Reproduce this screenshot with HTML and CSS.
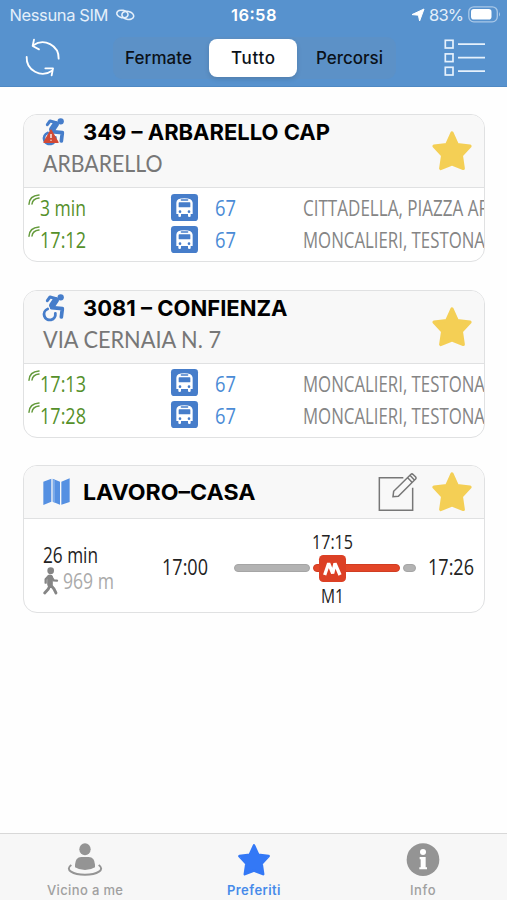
FILE: index.html
```html
<!DOCTYPE html>
<html lang="it">
<head>
<meta charset="utf-8">
<title>Preferiti</title>
<link rel="stylesheet" href="styles.css">
</head>
<body>
<svg class="defs" width="0" height="0">
  <symbol id="star" viewBox="0 0 42 42"><path d="M21 3 L26.2 14.5 L39 16.2 L30.4 25.5 L32.3 38.5 L21 34 L9.7 38.5 L11.600 25.500 L3 16.200 L15.800 14.500Z" fill="currentColor" stroke="currentColor" stroke-width="3.200" stroke-linejoin="round"/></symbol>
  <symbol id="bus" viewBox="0 0 81 81">
    <rect width="81" height="81" rx="10" fill="#467dca"/>
    <path d="M16 60V26Q16 13 40 13T65 26V60H59V66Q59 69 55 69T51 66V60H30V66Q30 69 26 69T22 66V60Z" fill="#fff"/>
    <rect x="29" y="16" width="23" height="4" rx="2" fill="#467dca"/>
    <rect x="23" y="25" width="35" height="15" rx="2" fill="#467dca"/>
    <circle cx="27" cy="53" r="4" fill="#467dca"/><circle cx="54" cy="53" r="4" fill="#467dca"/>
  </symbol>
  <symbol id="live" viewBox="0 0 36 36"><g fill="none" stroke="#659b3d" stroke-width="4.500" stroke-linecap="round"><path d="M3 31Q4 5 33 3"/><path d="M12 30Q14 14 33 12"/></g></symbol>
  <symbol id="wheel" viewBox="84 38 66 84">
    <circle cx="137" cy="48" r="9.500" fill="#467dca"/>
    <g fill="none" stroke="#467dca" stroke-linejoin="round" stroke-linecap="round">
      <path d="M97 58L105 47L124 52" stroke-width="9"/>
      <path d="M122 57L112 72" stroke-width="19"/>
      <path d="M110 79L142 82L139 107" stroke-width="11"/>
      <path d="M98 83A17 17 0 1 0 121 96" stroke-width="8.500"/>
    </g>
  </symbol>
</svg>

<header class="top">
  <div class="status">
    <svg class="carrier" width="126" height="20"><text class="ui st" x="9.500" y="20.500" textLength="99">Nessuna SIM</text></svg>
    <svg class="link" width="21" height="14" viewBox="0 0 21 14" fill="none" stroke="#e4effa" stroke-width="1.600"><ellipse cx="7.400" cy="6" rx="5.700" ry="3.700" transform="rotate(12 7.400 6)"/><ellipse cx="12.800" cy="7.400" rx="6" ry="4" transform="rotate(12 12.800 7.400)"/></svg>
    <svg class="clock" width="48" height="20"><text class="ui st bold" x="0" y="20.500" textLength="45.500">16:58</text></svg>
    <svg class="arrow" width="14" height="14" viewBox="0 0 14 14"><path d="M13 1L8.600 13L7.400 7.200L1 6.600Z" fill="#fff" stroke="#fff" stroke-linejoin="round"/></svg>
    <svg class="pct" width="36" height="20"><text class="ui st" x="0" y="20.500" textLength="35">83%</text></svg>
    <svg class="batt" width="33" height="17" viewBox="0 0 33 17"><rect x=".8" y=".8" width="28.500" height="15" rx="5" fill="none" stroke="#a9c8e8" stroke-width="1.300"/><rect x="3" y="3" width="20.500" height="10.600" rx="2.800" fill="#fff"/><path d="M31 6Q33 8.300 31 10.500Z" fill="#a9c8e8"/></svg>
  </div>
  <div class="nav">
    <svg class="refresh" width="36" height="40" viewBox="0 0 108 120" fill="none" stroke="#fff" stroke-width="5.500" stroke-linecap="round" stroke-linejoin="round"><path d="M104 62A48 48 0 0 0 28 22"/><path d="M30 5L26 24L45 34"/><path d="M8 57A48 48 0 0 0 84 98"/><path d="M64 91L87 91L83 112"/></svg>
    <div class="segments">
      <div class="seg first"><svg width="68" height="24"><text class="ui sg" x="0" y="18" textLength="67">Fermate</text></svg></div>
      <div class="seg on"><svg width="44" height="24"><text class="ui sg" x="0" y="18" textLength="44">Tutto</text></svg></div>
      <div class="seg last"><svg width="67" height="24"><text class="ui sg" x="0" y="18" textLength="67">Percorsi</text></svg></div>
    </div>
    <svg class="list" width="42" height="38" viewBox="0 0 42 38" fill="none" stroke="#e6f1fc" stroke-width="1.700"><rect x="1.300" y="1.300" width="7.700" height="7.700"/><rect x="1.300" y="14.900" width="7.700" height="7.700"/><rect x="1.300" y="28.300" width="7.700" height="7.700"/><path d="M14 5.200H41M14 18.700H41M14 32.200H41"/></svg>
  </div>
</header>

<main>
  <section class="card">
    <div class="head">
      <div class="names">
        <div class="line">
          <svg class="wc" width="22" height="28" viewBox="84 38 66 84"><use href="#wheel" x="84" y="38" width="66" height="84"/><path d="M108 74L129 111H87Z" fill="#d24a36" stroke="#d24a36" stroke-width="4" stroke-linejoin="round"/><path d="M108 86V98M108 103V106" stroke="#fff" stroke-width="4"/></svg>
          <svg width="250" height="34"><text class="title" x="0" y="25" textLength="247" lengthAdjust="spacingAndGlyphs">349 – ARBARELLO CAP</text></svg>
        </div>
        <svg width="130" height="34"><text class="sub" x="0" y="24.500" textLength="119.500" lengthAdjust="spacingAndGlyphs">ARBARELLO</text></svg>
      </div>
      <svg class="star" width="42" height="42"><use href="#star"/></svg>
    </div>
    <div class="rows">
      <div class="row"><svg class="live" width="12" height="12"><use href="#live"/></svg><svg class="time" width="50" height="32"><text class="pt green" x="0" y="24.500" textLength="46" lengthAdjust="spacingAndGlyphs">3 min</text></svg><svg class="bus" width="27" height="27"><use href="#bus"/></svg><svg class="num" width="24" height="32"><text class="pt blue" x="0" y="24.500" textLength="21" lengthAdjust="spacingAndGlyphs">67</text></svg><svg class="dest" width="182" height="32"><text class="pt gray" x="0" y="24.500" textLength="186" lengthAdjust="spacingAndGlyphs">CITTADELLA, PIAZZA AR</text></svg></div>
      <div class="row"><svg class="live" width="12" height="12"><use href="#live"/></svg><svg class="time" width="50" height="32"><text class="pt green" x="0" y="24.500" textLength="46" lengthAdjust="spacingAndGlyphs">17:12</text></svg><svg class="bus" width="27" height="27"><use href="#bus"/></svg><svg class="num" width="24" height="32"><text class="pt blue" x="0" y="24.500" textLength="21" lengthAdjust="spacingAndGlyphs">67</text></svg><svg class="dest" width="182" height="32"><text class="pt gray" x="0" y="24.500" textLength="182" lengthAdjust="spacingAndGlyphs">MONCALIERI, TESTONA</text></svg></div>
    </div>
  </section>

  <section class="card">
    <div class="head">
      <div class="names">
        <div class="line">
          <svg class="wc" width="22" height="28"><use href="#wheel"/></svg>
          <svg width="250" height="34"><text class="title" x="0" y="25" textLength="204.500" lengthAdjust="spacingAndGlyphs">3081 – CONFIENZA</text></svg>
        </div>
        <svg width="190" height="34"><text class="sub" x="0" y="24.500" textLength="178" lengthAdjust="spacingAndGlyphs">VIA CERNAIA N. 7</text></svg>
      </div>
      <svg class="star" width="42" height="42"><use href="#star"/></svg>
    </div>
    <div class="rows">
      <div class="row"><svg class="live" width="12" height="12"><use href="#live"/></svg><svg class="time" width="50" height="32"><text class="pt green" x="0" y="24.500" textLength="46" lengthAdjust="spacingAndGlyphs">17:13</text></svg><svg class="bus" width="27" height="27"><use href="#bus"/></svg><svg class="num" width="24" height="32"><text class="pt blue" x="0" y="24.500" textLength="21" lengthAdjust="spacingAndGlyphs">67</text></svg><svg class="dest" width="182" height="32"><text class="pt gray" x="0" y="24.500" textLength="182" lengthAdjust="spacingAndGlyphs">MONCALIERI, TESTONA</text></svg></div>
      <div class="row"><svg class="live" width="12" height="12"><use href="#live"/></svg><svg class="time" width="50" height="32"><text class="pt green" x="0" y="24.500" textLength="46" lengthAdjust="spacingAndGlyphs">17:28</text></svg><svg class="bus" width="27" height="27"><use href="#bus"/></svg><svg class="num" width="24" height="32"><text class="pt blue" x="0" y="24.500" textLength="21" lengthAdjust="spacingAndGlyphs">67</text></svg><svg class="dest" width="182" height="32"><text class="pt gray" x="0" y="24.500" textLength="182" lengthAdjust="spacingAndGlyphs">MONCALIERI, TESTONA</text></svg></div>
    </div>
  </section>

  <section class="card">
    <div class="head short">
      <svg class="map" width="28" height="28" viewBox="0 0 84 84"><path d="M1 11L25 2V71L1 81ZM29 2L51 11V80L29 71ZM55 11L80 1V72L55 80Z" fill="#5590e2"/><path d="M31 4L35 6V74L31 72Z" fill="#8eb7ef"/></svg>
      <svg class="route-name" width="180" height="34"><text class="title" x="0" y="24.500" textLength="172.500" lengthAdjust="spacingAndGlyphs">LAVORO–CASA</text></svg>
      <svg class="edit" width="40" height="40" viewBox="0 0 120 120" fill="none" stroke="#777" stroke-width="4.500"><path d="M76 14H4V112H104V44"/><path d="M45 71L47 55L99 4Q102 1 106 5L113 12Q116 16 112 19L61 70ZM89 14L102 28M96 7L109 21"/></svg>
      <svg class="star" width="42" height="42"><use href="#star"/></svg>
    </div>
    <div class="trip">
      <div class="summary">
        <svg width="60" height="26"><text class="pt dark" x="0" y="20.500" textLength="55" lengthAdjust="spacingAndGlyphs">26 min</text></svg>
        <div class="walk">
          <svg width="16" height="28" viewBox="0 0 48 84" fill="none" stroke="#858585" stroke-width="8.500" stroke-linecap="round" stroke-linejoin="round"><circle cx="23" cy="11" r="10" fill="#858585" stroke="none"/><path d="M21 31V51" stroke-width="17"/><path d="M15 29L8 37V47M26 30L32 40L42 41" stroke-width="7"/><path d="M20 56L16 66L5 78M24 55L33 66L39 78"/></svg>
          <svg width="54" height="28"><text class="pt light" x="0" y="21.500" textLength="51" lengthAdjust="spacingAndGlyphs">969 m</text></svg>
        </div>
      </div>
      <svg class="start" width="48" height="30"><text class="pt dark" x="0" y="23" textLength="46" lengthAdjust="spacingAndGlyphs">17:00</text></svg>
      <div class="track">
        <div class="bar g1"></div>
        <div class="ride">
          <svg class="at" width="42" height="22"><text class="pt dark small" x="0" y="18" textLength="41" lengthAdjust="spacingAndGlyphs">17:15</text></svg>
          <div class="leg"><svg class="metro" width="27" height="27" viewBox="0 0 81 81"><rect width="81" height="81" rx="13" fill="#dc4025"/><path d="M17 60L29 25L41 55L48 25L63 60" fill="none" stroke="#fff" stroke-width="10" stroke-linejoin="bevel"/></svg></div>
          <svg class="line-name" width="24" height="22"><text class="pt dark small" x="0" y="17.500" textLength="23" lengthAdjust="spacingAndGlyphs">M1</text></svg>
        </div>
        <div class="bar g2"></div>
      </div>
      <svg class="end" width="48" height="30"><text class="pt dark" x="0" y="23" textLength="46" lengthAdjust="spacingAndGlyphs">17:26</text></svg>
    </div>
  </section>
</main>

<nav class="tabs">
  <div class="tab"><svg width="36" height="36" viewBox="0 0 108 108"><g fill="#949494"><ellipse cx="54" cy="22" rx="17" ry="18"/><path d="M24 76V68Q25 46 43 45H65Q83 46 84 68V76Q72 84 54 84T24 76Z"/></g><path d="M13 69C-8 83 18 98 54 98S116 83 95 69" fill="none" stroke="#949494" stroke-width="6"/></svg><svg width="76" height="18"><text class="ui tb" x="0" y="12.500" textLength="76">Vicino a me</text></svg></div>
  <div class="tab active"><svg width="36" height="36" viewBox="0 0 36 36"><use href="#star" x="1" y="1" width="34" height="34"/></svg><svg width="54" height="18"><text class="ui tb" x="0" y="12.500" textLength="53.500">Preferiti</text></svg></div>
  <div class="tab"><svg width="36" height="36" viewBox="0 0 108 108"><circle cx="54" cy="53" r="49" fill="#949494"/><circle cx="54" cy="30" r="9" fill="#fff"/><path d="M44 45H62V76H66V82H43V76H47V52H44Z" fill="#fff"/></svg><svg width="26" height="18"><text class="ui tb" x="0" y="12.500" textLength="25.500">Info</text></svg></div>
</nav>
</body>
</html>
```
FILE: styles.css
```css
* { box-sizing: border-box; }
body { margin: 0; width: 507px; height: 900px; background: #fefefe; display: flex; flex-direction: column; overflow: hidden; font-family: Inter, sans-serif; }
svg { display: block; flex: none; overflow: visible; }
.defs { position: absolute; }
symbol { overflow: visible; }

.ui { font-family: Inter, sans-serif; }
.st { font-size: 16.5px; fill: #e4effa; }
.bold { font-weight: 600; fill: #fff; }
.sg { font-size: 17px; font-weight: 500; fill: #0b1119; }
.tb { font-size: 13px; font-weight: 500; fill: #a0a0a0; }
.title { font-family: Inter, sans-serif; font-size: 21.800px; font-weight: 700; fill: #000; }
.sub { font-family: Lato, sans-serif; font-size: 22.500px; fill: #777; }
.pt { font-family: "Open Sans", sans-serif; font-size: 21.500px; }
.small { font-size: 19.500px; }
.green { fill: #55902a; }
.blue { fill: #4a8bd6; }
.gray { fill: #858585; }
.dark { fill: #222; }
.light { fill: #aaa; }

.top { height: 87px; flex: none; background: #5792ce; border-bottom: 1px solid #4f89c4; }
.status { height: 30px; display: flex; }
.carrier { margin-right: -11px; }
.link { margin-top: 8px; }
.clock { margin-left: 95px; }
.arrow { margin: 8px 0 0 132px; }
.pct { margin-left: 4px; }
.batt { margin: 6px 0 0 3px; }
.nav { display: flex; align-items: flex-start; }
.refresh { margin: 8px 0 0 24px; }
.segments { margin: 7px 0 0 53px; width: 283px; height: 42px; padding: 2px; border-radius: 9px; background: #5c91c7; display: flex; }
.seg { width: 93px; height: 38px; display: flex; align-items: center; justify-content: center; }
.seg.first { padding-right: 5px; }
.seg.last { padding-left: 4px; }
.seg.on { margin: 0 4px 0 1px; width: 89px; border-radius: 8px; background: #fff; box-shadow: 0 2px 5px rgba(0,0,0,.13); }
.seg svg { height: 24px; }
.list { margin: 9px 0 0 48px; }

main { flex: 1; padding: 27px 22px 0 23px; display: flex; flex-direction: column; gap: 27.500px; }
.card { height: 148px; border: 1.500px solid #e0e1e2; border-radius: 14px; overflow: hidden; background: #fff; }
.head { height: 73px; background: #f8f8f8; border-bottom: 1.500px solid #e0e1e2; display: flex; }
.names { width: 408px; padding-left: 19px; }
.line { display: flex; height: 32px; }
.wc { margin: 3px 18px 0 0; }
.head > .star { margin-top: 15px; margin-left: -1px; }
.star { color: #f4cf55; }
.rows { padding-top: 3px; }
.row { display: flex; height: 32.300px; }
.live { margin: 3px 0 0 4px; }
.time { margin-left: 0; }
.bus { margin: 2.500px 0 0 81px; }
.num { margin-left: 17px; }
.dest { margin-left: 64px; }

.head.short { height: 53px; }
.map { margin: 12px 0 0 19px; }
.route-name { margin: 8.500px 0 0 12px; }
.edit { margin: 7px 0 0 115px; }
.head.short .star { margin: 5px 0 0 13px; }
.trip { display: flex; height: 94px; }
.summary { width: 138px; padding: 22.500px 0 0 19px; }
.walk { display: flex; gap: 4px; margin-top: -1px; }
.start { margin: 33px 26px 0 0; }
.track { display: flex; width: 182px; margin-left: -2px; }
.bar { height: 8px; border-radius: 4px; background: #b3b3b3; border: 1px solid #a5a5a5; margin-top: 45px; flex: none; }
.g1 { width: 76px; }
.g2 { width: 13px; }
.ride { width: 87px; margin: 0 3px; padding-top: 12px; }
.at { margin-left: -1px; }
.leg { height: 8px; border-radius: 4px; background: #e34628; border: 1px solid #d13d22; margin-top: 11px; display: flex; align-items: center; }
.metro { margin-left: 5px; }
.line-name { margin: 13px 0 0 8px; }
.end { margin: 33px 0 0 12px; }

.tabs { height: 67px; flex: none; background: #f7f7f7; border-top: 1.500px solid #d8d8d8; display: grid; grid-template-columns: repeat(3, 1fr); }
.tab { display: flex; flex-direction: column; align-items: center; padding-top: 8px; gap: 4px; }
.tab.active { color: #3378f6; }
.tab.active .tb { fill: #478bea; font-weight: 600; }
```
